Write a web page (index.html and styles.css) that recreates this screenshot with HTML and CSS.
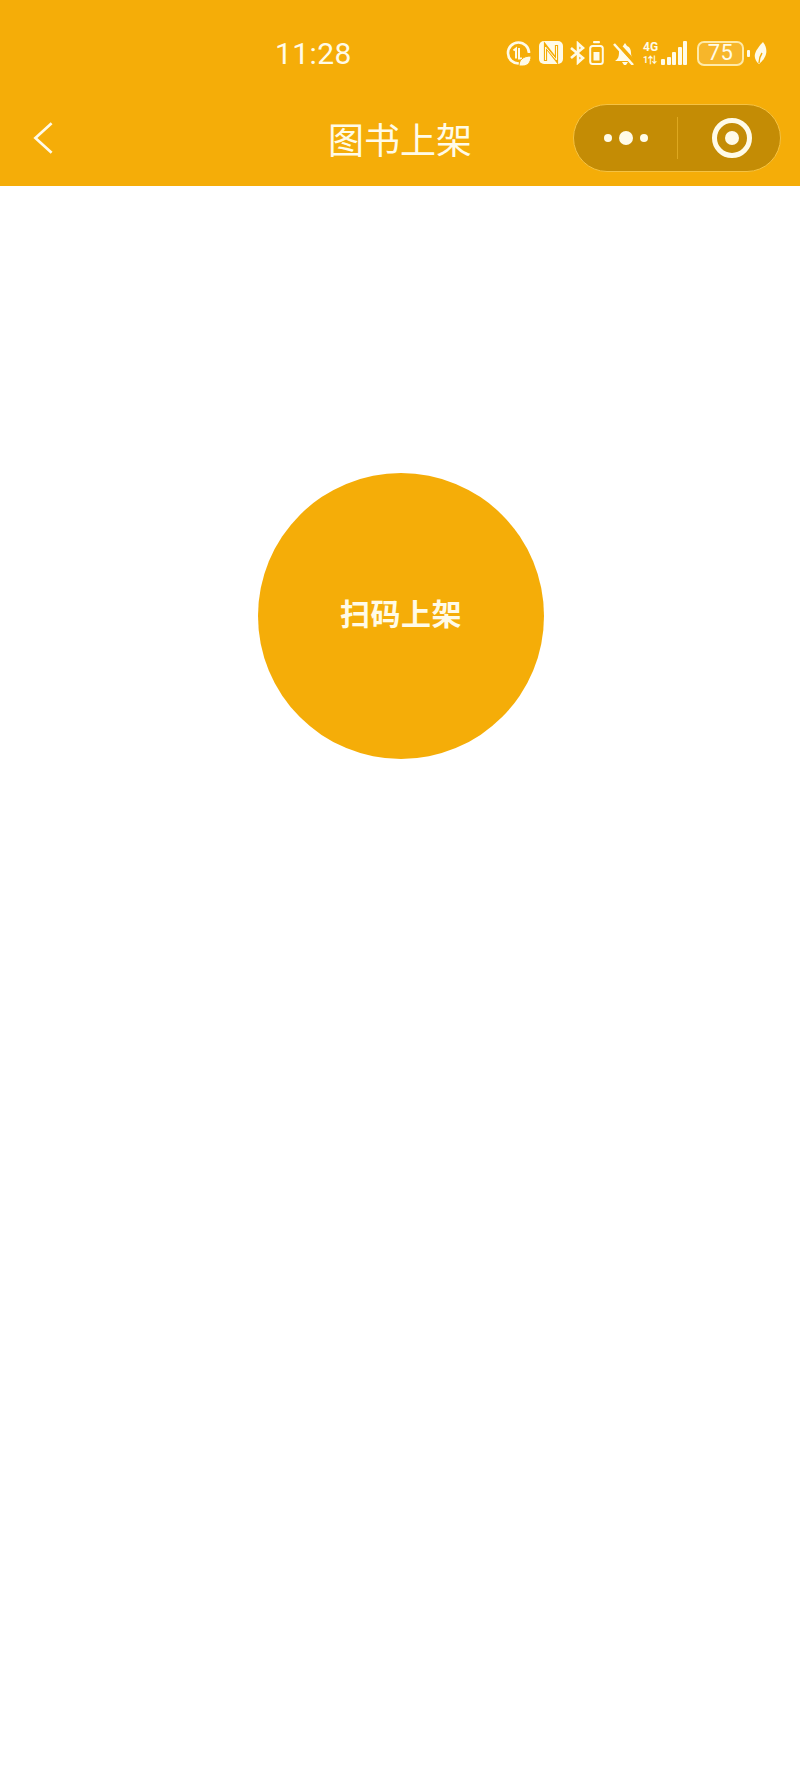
FILE: index.html
```html
<!DOCTYPE html>
<html lang="zh-CN">
<head>
<meta charset="utf-8">
<title>图书上架</title>
<link rel="stylesheet" href="styles.css">
</head>
<body>
<header class="header">
  <div class="status">
    <span class="time">11:28</span>
    <div class="status-icons">
      <svg class="ic ic-hd" viewBox="0 0 25 25"><path d="M13 22.500A10.500 10.500 0 1 1 23 12" fill="none" stroke="#fffbe8" stroke-width="2.600"/><path d="M7.500 9.500l2.500-2v10M13 7v10.500h3" fill="none" stroke="#fffbe8" stroke-width="2"/><path d="M13 25c0-6 4-10 12-10 0 7-4 10-8 10z" fill="#fffbe8" stroke="#f5ad08" stroke-width="1"/></svg>
      <svg class="ic ic-nfc" viewBox="0 0 24 24"><rect width="24" height="23" rx="5" fill="#fffbe8"/><path d="M6.500 20V5l11 14V4" fill="none" stroke="#f5ad08" stroke-width="3.200"/><path d="M6.500 19V6l11 13V5" fill="none" stroke="#fffbe8" stroke-width="1"/></svg>
      <svg class="ic ic-bt" viewBox="0 0 15 24"><path d="M1 7l12 10-5 4.500V2.500L13 7 1 17" fill="none" stroke="#fffbe8" stroke-width="2.600"/></svg>
      <svg class="ic ic-vib" viewBox="0 0 15 24"><rect x="1.200" y="5" width="12.600" height="18" rx="2.500" fill="none" stroke="#fffbe8" stroke-width="2"/><rect x="4" y="0" width="7" height="2.200" rx="1" fill="#fffbe8"/><rect x="4.500" y="11" width="6" height="8.500" fill="#fffbe8"/></svg>
      <svg class="ic ic-bell" viewBox="0 0 23 24"><path d="M2 20c3-2 4-4 4-9 0-3 2-5 4-6l2-3 2 3c3 1 4 4 4 7 0 3 1 5 4 8zM9 21h6l-2 3h-2z" fill="#fffbe8"/><path d="M3 1l19 21" stroke="#f5ad08" stroke-width="4"/><path d="M1 3l19 21" stroke="#fffbe8" stroke-width="2.500"/></svg>
      <div class="net">
        <span class="net-label">4G</span>
        <span class="net-sub">1⇅</span>
      </div>
      <div class="bars">
        <i class="bar bar-1"></i><i class="bar bar-2"></i><i class="bar bar-3"></i><i class="bar bar-4"></i><i class="bar bar-5"></i>
      </div>
      <div class="battery"><span class="battery-level">75</span></div>
      <i class="battery-tip"></i>
      <svg class="ic ic-leaf" viewBox="0 0 13 22"><path d="M9 0c3 4 4 8 3 12-1 4-4 8-7 10-3-2-5-6-4-10C2 8 6 3 9 0z" fill="#fffbe8"/><path d="M5 21c0-4 1-7 3-10" stroke="#f5ad08" stroke-width="1.400" fill="none"/></svg>
    </div>
  </div>
  <nav class="nav">
    <div class="nav-left">
      <svg class="back" viewBox="0 0 22 34"><path d="M19.500 1.500L2.500 17l17 15.500" fill="none" stroke="#fffbe8" stroke-width="2.800"/></svg>
    </div>
    <h1 class="title">图书上架</h1>
    <div class="nav-right">
      <div class="capsule">
        <div class="dots"><i class="dot"></i><i class="dot dot-big"></i><i class="dot"></i></div>
        <i class="divider"></i>
        <div class="target"><i class="target-core"></i></div>
      </div>
    </div>
  </nav>
</header>
<main class="main">
  <button class="scan" type="button">扫码上架</button>
</main>
</body>
</html>
```
FILE: styles.css
```css
* { box-sizing: border-box; }
html, body { margin: 0; padding: 0; }
body {
  width: 800px;
  height: 1768px;
  background: #fff;
  color: #fff;
  font-family: "Noto Sans CJK SC", "Noto Sans", sans-serif;
  overflow: hidden;
}
.header { height: 186px; background: #f5ad08; }
.status {
  height: 90px;
  padding: 16px 20px 0 275px;
  display: flex;
  align-items: center;
}
.time {
  font-family: Roboto, sans-serif;
  font-size: 30px;
  letter-spacing: 0.4px;
  color: #fffbe8;
}
.status-icons { margin-left: auto; margin-right: 13px; display: flex; align-items: center; }
.ic { display: block; flex: none; }
.ic-hd { width: 25px; height: 25px; }
.ic-nfc { width: 24px; height: 24px; margin-left: 8px; }
.ic-bt { width: 15px; height: 24px; margin-left: 7px; }
.ic-vib { width: 15px; height: 24px; margin-left: 4px; }
.ic-bell { width: 23px; height: 24px; margin-left: 9px; }
.net { width: 17px; margin-left: 7px; display: flex; flex-direction: column; align-items: flex-start; color: #fffbe8; }
.net-label { font: 700 12px/13px Roboto, sans-serif; }
.net-sub { font: 700 9px/9px Roboto, sans-serif; margin-top: 2px; }
.bars { display: flex; align-items: flex-end; gap: 1.500px; height: 24px; margin-left: 1px; }
.bar { display: block; width: 4px; background: #fffbe8; border-radius: 1px; }
.bar-1 { height: 6px; }
.bar-2 { height: 8px; }
.bar-3 { height: 13px; }
.bar-4 { height: 18px; }
.bar-5 { height: 24px; }
.battery {
  width: 47px;
  height: 25px;
  margin-left: 10px;
  border: 2.500px solid #ffeaa8;
  border-radius: 7px;
  background: #f7b62a;
  display: flex;
  align-items: center;
  justify-content: center;
}
.battery-level { font: 400 22px/1 Roboto, sans-serif; color: #fffbe8; letter-spacing: 0.5px; }
.battery-tip { display: block; width: 3px; height: 7px; margin-left: 3px; background: #fffbe8; border-radius: 1px; }
.ic-leaf { width: 13px; height: 22px; margin-left: 4px; }
.nav {
  height: 96px;
  display: grid;
  grid-template-columns: 1fr auto 1fr;
  align-items: center;
}
.nav-left { padding-left: 33px; }
.back { display: block; width: 21px; height: 34px; }
.title { margin: 0; font-size: 36px; font-weight: 400; line-height: 1; color: #fffbe8; }
.nav-right { display: flex; justify-content: flex-end; padding-right: 19px; }
.capsule {
  width: 208px;
  height: 68px;
  border-radius: 34px;
  background: #c48c05;
  border: 1px solid #f5c242;
  display: flex;
  align-items: center;
}
.dots { width: 103px; display: flex; align-items: center; justify-content: center; gap: 7px; }
.dot { display: block; width: 8px; height: 8px; border-radius: 50%; background: #fffbe8; }
.dot-big { width: 14px; height: 14px; }
.divider { display: block; width: 1px; height: 42px; background: #dea81f; }
.target {
  flex: none;
  width: 40px;
  height: 40px;
  margin-left: 34px;
  border: 5px solid #fffbe8;
  border-radius: 50%;
  display: flex;
  justify-content: center;
  align-items: center;
}
.target-core { display: block; width: 14px; height: 14px; background: #fffbe8; border-radius: 50%; }
.main { display: flex; justify-content: center; padding: 287px 0 0 2px; }
.scan {
  width: 286px;
  height: 286px;
  border: 0;
  padding: 0 0 8px;
  border-radius: 50%;
  background: #f5ad08;
  color: #fffbe8;
  font-family: "Noto Sans CJK SC", sans-serif;
  font-size: 30px;
  font-weight: 700;
  letter-spacing: 0.5px;
}
```
